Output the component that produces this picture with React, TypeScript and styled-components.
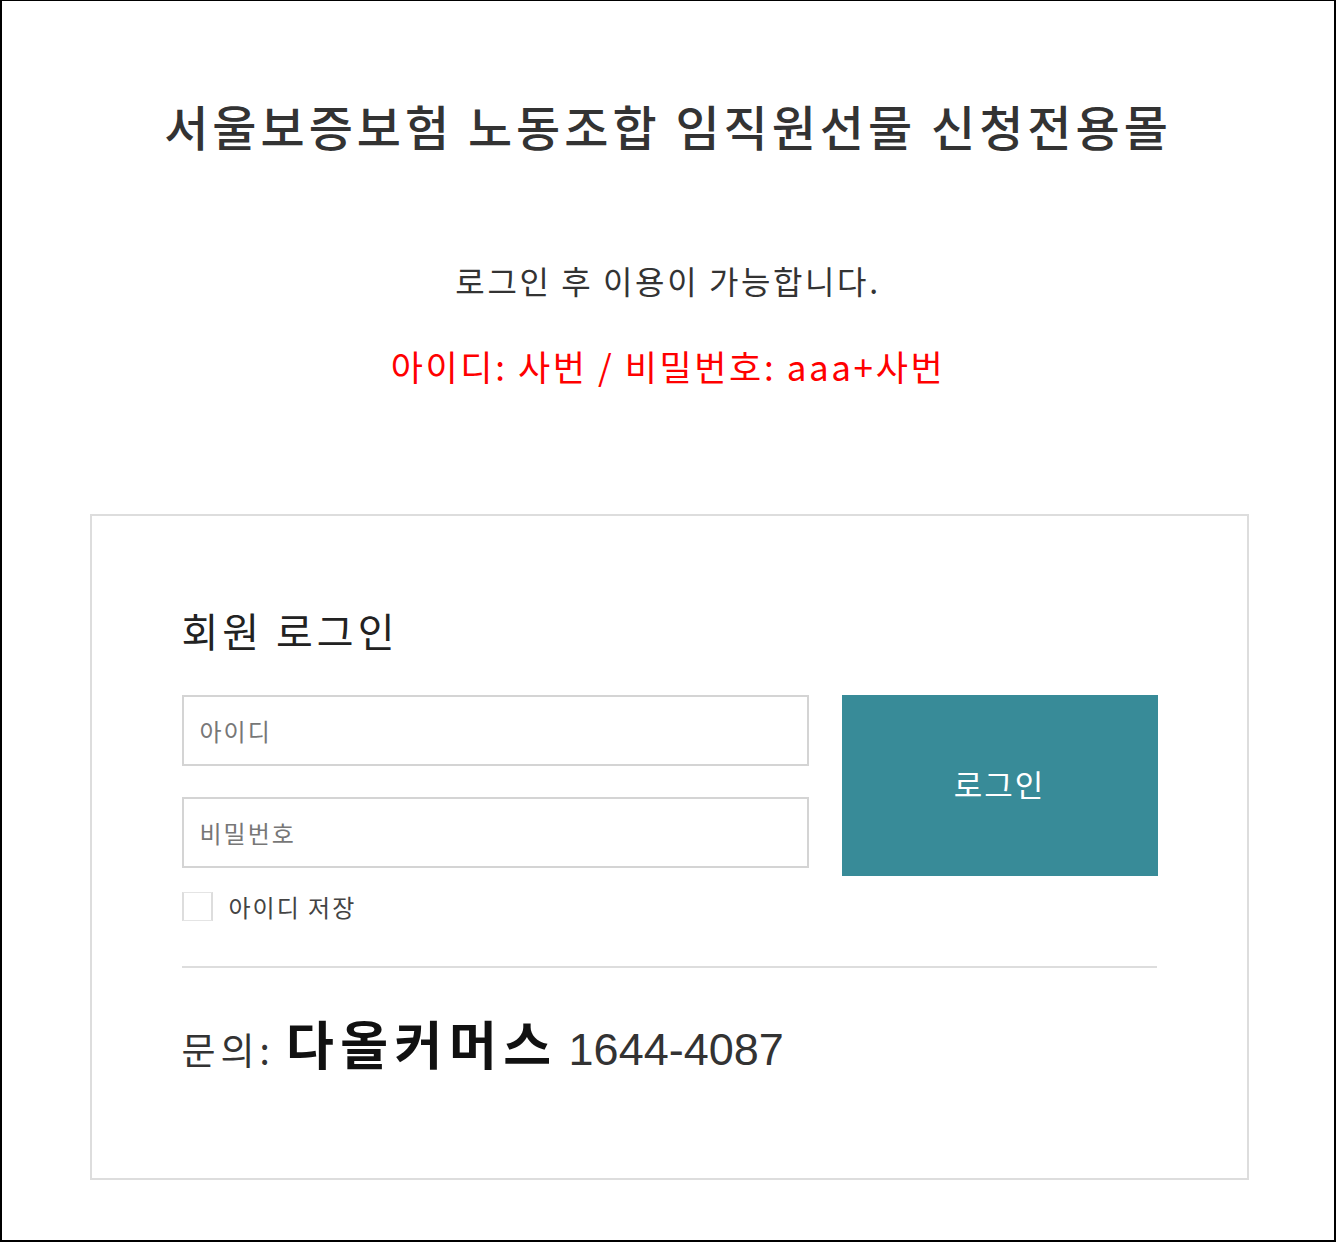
import React from "react";
import styled, { createGlobalStyle } from "styled-components";

const Global = createGlobalStyle`
  html, body { margin: 0; padding: 0; background: #fff; }
  body { font-family: "Liberation Sans", "Noto Sans CJK KR", sans-serif; }
  * { box-sizing: border-box; }
`;

const Page = styled.div`
  width: 1336px;
  height: 1242px;
  border: 2px solid #000;
  border-top-width: 1px;
  background: #fff;
  display: flex;
  flex-direction: column;
  align-items: center;
  padding-top: 95px;
`;

const Title = styled.h1`
  margin: 0;
  font-family: "Noto Sans CJK KR", sans-serif;
  font-weight: 500;
  font-size: 48px;
  line-height: 58px;
  color: #333;
  letter-spacing: 4px;
`;

const Notice = styled.p`
  margin: 106px 0 0;
  font-family: "Noto Sans CJK KR", sans-serif;
  font-size: 32px;
  line-height: 40px;
  color: #333;
  letter-spacing: 2.6px;
`;

const Hint = styled.p`
  margin: 44px 0 0;
  font-family: "Noto Sans CJK KR", sans-serif;
  font-size: 35px;
  line-height: 44px;
  color: #f00;
  letter-spacing: 2.6px;
`;

const Box = styled.section`
  margin-top: 126px;
  margin-left: 2px;
  width: 1159px;
  border: 2px solid #ddd;
  padding: 90px 90px 101px;
`;

const Heading = styled.h2`
  margin: 0;
  font-family: "Noto Sans CJK KR", sans-serif;
  font-weight: 400;
  font-size: 40px;
  line-height: 48px;
  color: #222;
  letter-spacing: 4px;
`;

const FormGrid = styled.div`
  margin-top: 41px;
  display: grid;
  grid-template-columns: 627px 316px;
  column-gap: 33px;
  align-items: start;
`;

const Fields = styled.div`
  display: flex;
  flex-direction: column;
  gap: 31px;
`;

const Input = styled.input`
  width: 627px;
  height: 71px;
  border: 2px solid #d4d4d4;
  padding: 0 16px;
  font-family: "Noto Sans CJK KR", sans-serif;
  font-size: 24px;
  letter-spacing: 2px;
  color: #333;
  outline: none;
  &::placeholder { color: #777; }
`;

const SaveRow = styled.label`
  margin-top: -10px;
  display: flex;
  align-items: center;
  gap: 16px;
  font-family: "Noto Sans CJK KR", sans-serif;
  font-size: 24px;
  letter-spacing: 2px;
  color: #444;
`;

const Check = styled.span`
  width: 31px;
  height: 29px;
  border: 1px solid #e4e4e4;
  border-left: 2px solid #ddd;
  border-right: 2px solid #ddd;
  background: #fff;
`;

const LoginButton = styled.button`
  height: 181px;
  border: none;
  background: #388b98;
  color: #fff;
  font-family: "Noto Sans CJK KR", sans-serif;
  font-size: 31px;
  letter-spacing: 2px;
  padding: 0 0 4px;
  cursor: pointer;
`;

const Divider = styled.hr`
  margin: 42px 0 0;
  border: none;
  border-top: 2px solid #ddd;
`;

const Contact = styled.p`
  margin: 44px 0 0;
  display: flex;
  align-items: baseline;
  gap: 11px;
  line-height: 1.2;
`;

const ContactLabel = styled.span`
  font-family: "Noto Sans CJK KR", sans-serif;
  font-size: 37px;
  letter-spacing: 5px;
  color: #333;
`;

const Company = styled.span`
  font-family: "Noto Sans CJK KR", sans-serif;
  font-weight: 700;
  font-size: 52px;
  letter-spacing: 6.5px;
  color: #111;
`;

const Phone = styled.span`
  font-family: "Liberation Sans", sans-serif;
  font-size: 45px;
  color: #333;
`;

export default function App() {
  return (
    <>
      <Global />
      <Page>
        <Title>서울보증보험 노동조합 임직원선물 신청전용몰</Title>
        <Notice>로그인 후 이용이 가능합니다.</Notice>
        <Hint>아이디: 사번 / 비밀번호: aaa+사번</Hint>
        <Box>
          <Heading>회원 로그인</Heading>
          <FormGrid>
            <Fields>
              <Input placeholder="아이디" />
              <Input placeholder="비밀번호" type="password" />
              <SaveRow>
                <Check />
                아이디 저장
              </SaveRow>
            </Fields>
            <LoginButton>로그인</LoginButton>
          </FormGrid>
          <Divider />
          <Contact>
            <ContactLabel>문의:</ContactLabel>
            <Company>다올커머스</Company>
            <Phone>1644-4087</Phone>
          </Contact>
        </Box>
      </Page>
    </>
  );
}
